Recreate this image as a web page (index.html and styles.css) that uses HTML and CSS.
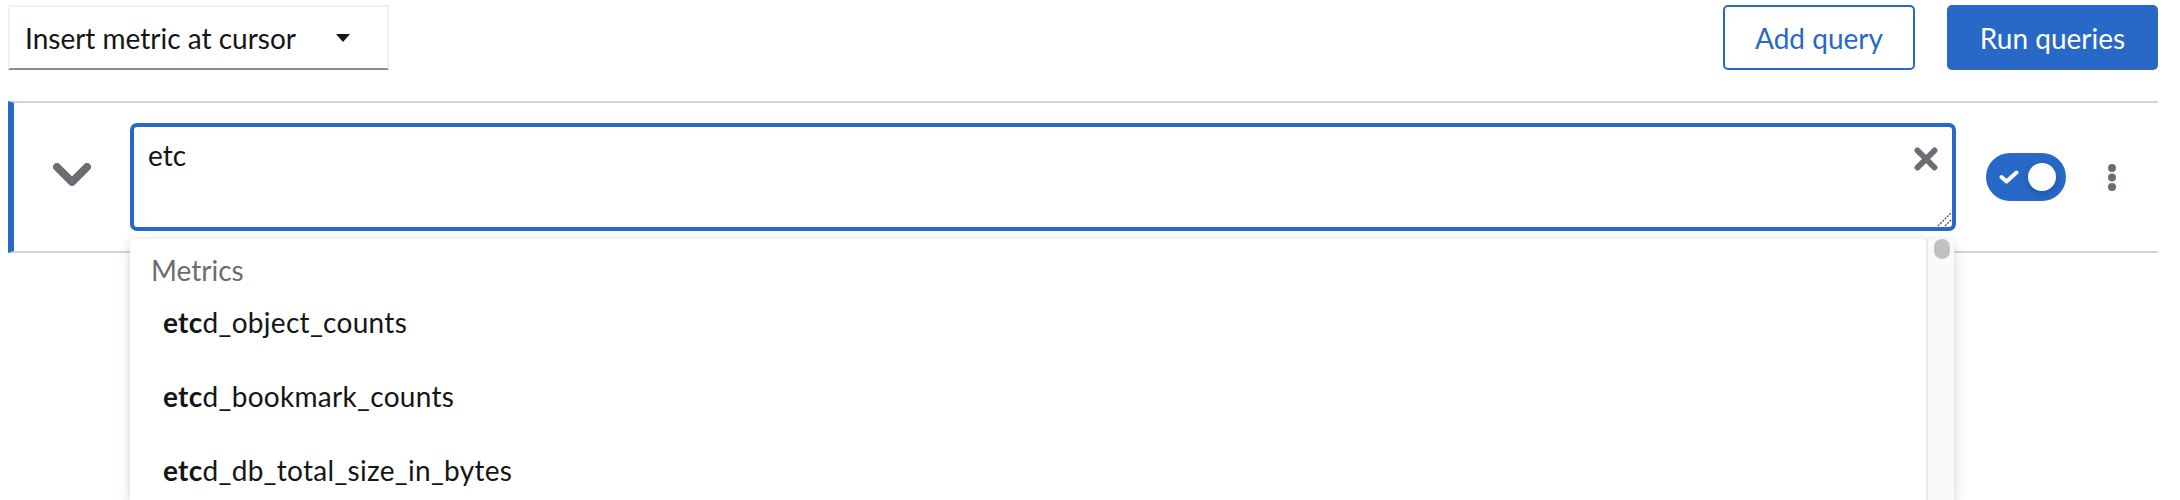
FILE: index.html
```html
<!DOCTYPE html>
<html lang="en">
<head>
<meta charset="utf-8">
<title>Query browser</title>
<link rel="stylesheet" href="styles.css">
</head>
<body>
<div class="page">
  <div class="toolbar">
    <button class="select-toggle" type="button">
      <span class="select-text">Insert metric at cursor</span>
      <svg class="caret" width="14" height="8" viewBox="0 0 14 8"><path d="M0 0 H14 L7 8 Z" fill="#151515"/></svg>
    </button>
    <div class="actions">
      <button class="btn btn-secondary" type="button">Add query</button>
      <button class="btn btn-primary" type="button">Run queries</button>
    </div>
  </div>

  <div class="query-row">
    <button class="expand" type="button" aria-label="Collapse">
      <svg width="38" height="24" viewBox="0 0 38 24"><polyline points="4,4 19,19 34,4" fill="none" stroke="#6a6e73" stroke-width="8" stroke-linecap="round" stroke-linejoin="round"/></svg>
    </button>
    <div class="query-field">
      <textarea class="query-input" spellcheck="false">etc</textarea>
      <button class="clear" type="button" aria-label="Clear">
        <svg width="24" height="24" viewBox="0 0 24 24"><path d="M3.5 3.5 L20.5 20.5 M20.5 3.5 L3.5 20.5" stroke="#6a6e73" stroke-width="6" stroke-linecap="round"/></svg>
      </button>
      <svg class="grip" width="16" height="16" viewBox="0 0 16 16"><path d="M2 15 L15 2 M9 15 L15 9" stroke="#5a5a5a" stroke-width="1.4" stroke-dasharray="2 1.2"/></svg>
      <div class="menu">
        <div class="menu-list">
          <div class="menu-group">Metrics</div>
          <div class="menu-item"><b>etc</b>d_object_counts</div>
          <div class="menu-item"><b>etc</b>d_bookmark_counts</div>
          <div class="menu-item"><b>etc</b>d_db_total_size_in_bytes</div>
        </div>
        <div class="scrollbar"><div class="thumb"></div></div>
      </div>
    </div>
    <div class="switch">
      <svg width="20" height="14" viewBox="0 0 20 14"><polyline points="2.5,7 7.5,11.5 17.5,2.5" fill="none" stroke="#fff" stroke-width="4" stroke-linecap="round" stroke-linejoin="round"/></svg>
      <span class="knob"></span>
    </div>
    <button class="kebab" type="button" aria-label="Actions">
      <svg width="8" height="27" viewBox="0 0 8 27"><circle cx="4" cy="4" r="4" fill="#6a6e73"/><circle cx="4" cy="13.5" r="4" fill="#6a6e73"/><circle cx="4" cy="23" r="4" fill="#6a6e73"/></svg>
    </button>
  </div>
</div>
</body>
</html>
```
FILE: styles.css
```css
* { box-sizing: border-box; }

html, body {
  margin: 0;
  height: 100%;
  background: #fff;
}

body {
  font-family: "Lato", "Liberation Sans", sans-serif;
  font-size: 28px;
  color: #151515;
}

button {
  font: inherit;
  color: inherit;
  background: none;
  border: 0;
  padding: 0;
  margin: 0;
  cursor: pointer;
}

.page {
  height: 500px;
  overflow: hidden;
  padding: 5px 22px 0 8px;
}

/* toolbar */
.toolbar {
  display: flex;
  justify-content: space-between;
  align-items: center;
  height: 65px;
}

.select-toggle {
  display: flex;
  align-items: center;
  justify-content: space-between;
  width: 381px;
  height: 65px;
  padding: 0 37px 0 15px;
  border: 2px solid #f0f0f0;
  border-bottom-color: #8a8d90;
  background: #fff;
  line-height: 1;
}

.caret { display: block; }

.actions {
  display: flex;
  gap: 32px;
}

.btn {
  height: 65px;
  border: 2px solid #2868c6;
  border-radius: 5px;
  padding: 0 30px;
  line-height: 1;
}

.btn-secondary {
  background: #fff;
  color: #2868c6;
  width: 192px;
}

.btn-primary {
  background: #2868c6;
  color: #fff;
  width: 211px;
}

/* query row */
.query-row {
  margin-top: 31px;
  display: flex;
  align-items: center;
  padding: 20px 22px 20px 0;
  border-top: 2px solid #d2d2d2;
  border-bottom: 2px solid #d2d2d2;
  border-left: 6px solid #2868c6;
}

.expand {
  width: 116px;
  display: flex;
  justify-content: center;
  align-items: center;
  margin-top: -4px;
}

.expand svg { display: block; }

.query-field {
  position: relative;
  flex: 1;
  height: 108px;
}

.query-input {
  display: block;
  width: 100%;
  height: 108px;
  border: 4px solid #2868c6;
  border-radius: 7px;
  padding: 7px 60px 7px 14px;
  font: inherit;
  line-height: 42px;
  color: #151515;
  resize: none;
  outline: none;
  overflow: hidden;
  background: #fff;
}

.clear {
  position: absolute;
  top: 24px;
  right: 18px;
  width: 24px;
  height: 24px;
}

.clear svg, .grip, .kebab svg, .switch svg { display: block; }

.grip {
  position: absolute;
  right: 4px;
  bottom: 4px;
}

/* autocomplete menu */
.menu {
  position: absolute;
  top: 116px;
  left: 0;
  width: 1824px;
  height: 261px;
  display: flex;
  background: #fff;
  box-shadow: 0 7px 14px rgba(3, 3, 3, 0.12), 0 0 7px rgba(3, 3, 3, 0.07);
  z-index: 2;
  overflow: hidden;
}

.menu-list {
  flex: 1;
  padding-top: 16px;
}

.menu-group {
  padding-left: 21px;
  line-height: 30px;
  color: #6a6e73;
}

.menu-item {
  padding: 16px 0 16px 33px;
  line-height: 42px;
  letter-spacing: 0.3px;
  color: #151515;
}

.menu-item b { font-weight: 700; }

.scrollbar {
  width: 28px;
  background: #fafafa;
  border-left: 2px solid #e8e8e8;
  padding-left: 6px;
}

.thumb {
  width: 16px;
  height: 20px;
  border-radius: 8px;
  background: #c1c1c1;
}

/* switch */
.switch {
  margin-left: 30px;
  width: 80px;
  height: 48px;
  border-radius: 24px;
  background: #2868c6;
  display: flex;
  align-items: center;
  justify-content: space-between;
  padding: 0 10px 0 13px;
}

.knob {
  width: 28px;
  height: 28px;
  border-radius: 50%;
  background: #fff;
  box-shadow: 0 3px 7px rgba(3, 3, 3, 0.18);
}

.kebab {
  margin-left: 22px;
  width: 48px;
  height: 48px;
  display: flex;
  justify-content: center;
  align-items: center;
}
```
